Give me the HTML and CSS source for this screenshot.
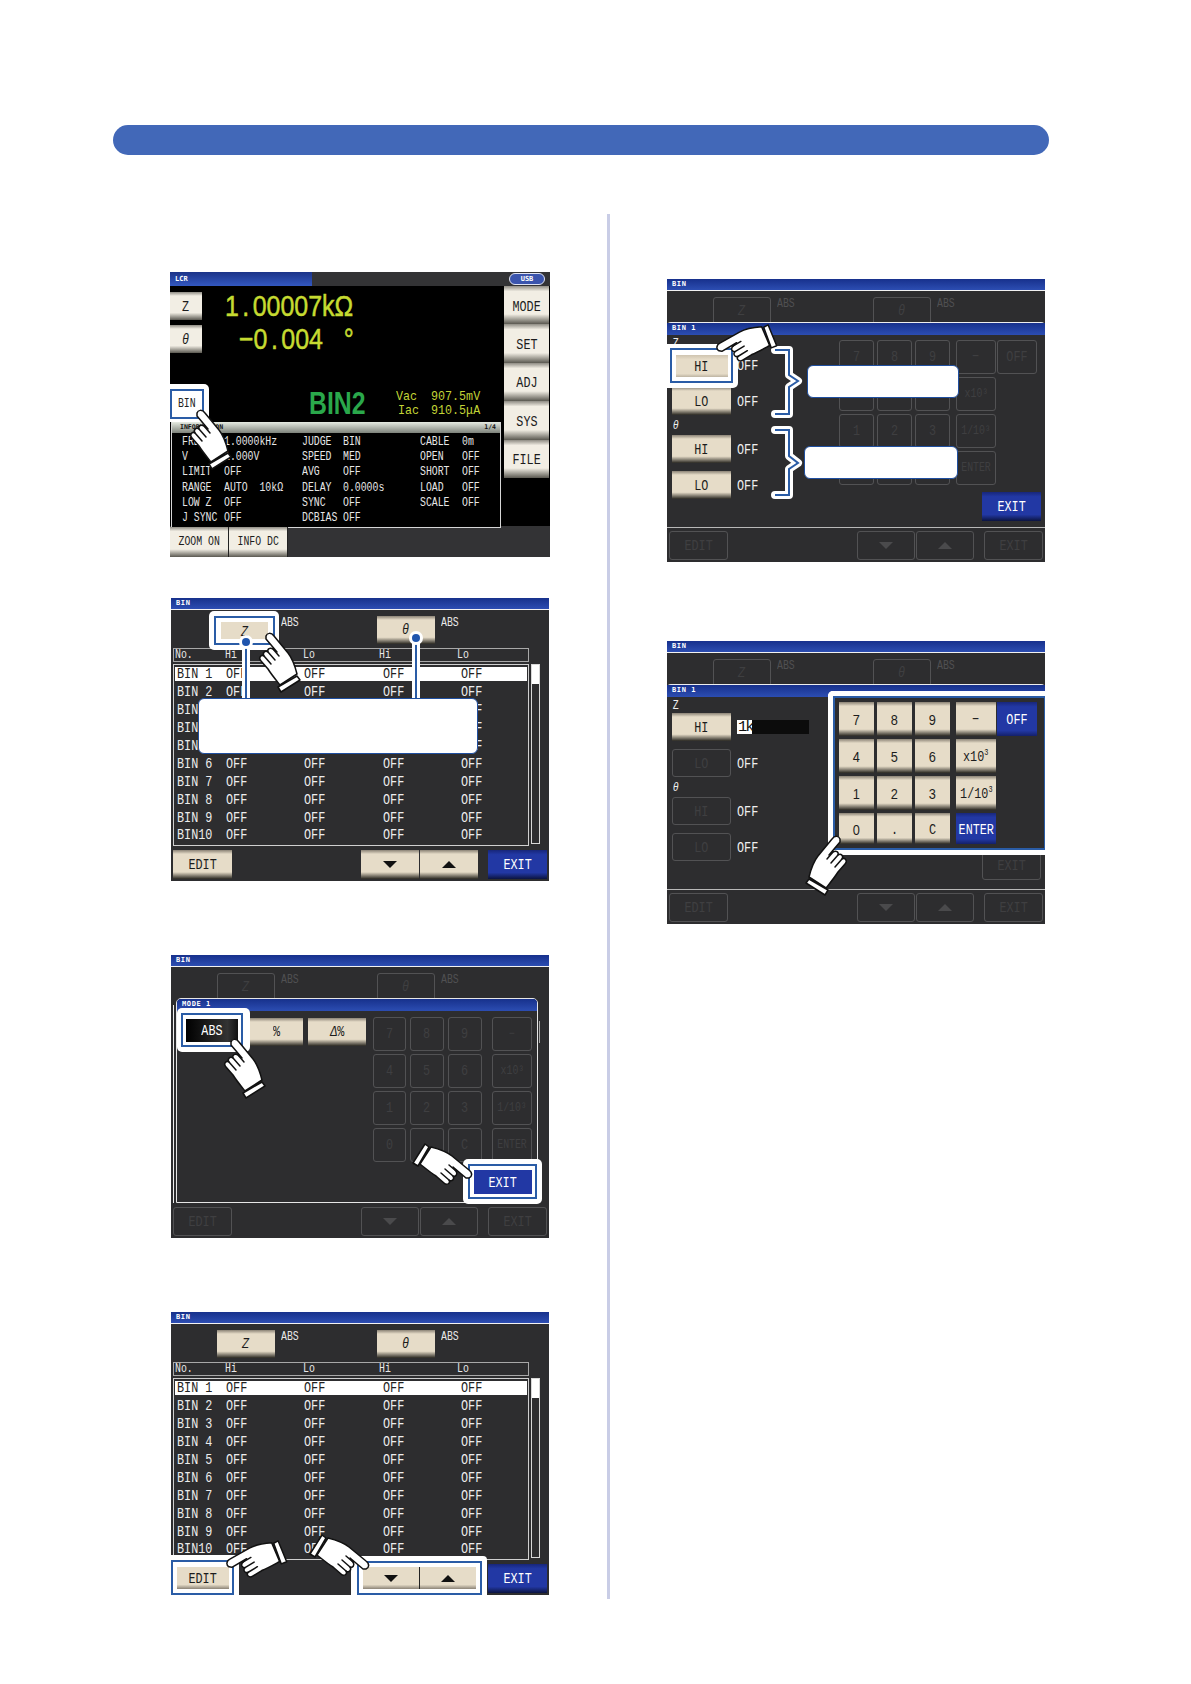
FILE: index.html
```html
<!DOCTYPE html>
<html lang="en">
<head>
<meta charset="utf-8">
<title>BIN settings</title>
<link rel="stylesheet" href="styles.css">
</head>
<body>
<svg class="defs" width="0" height="0" aria-hidden="true">
  <symbol id="hand" viewBox="0 0 50 70">
    <path class="hand-body" d="M11 12C12 9 16 8 19 12L33 29C37 34 40 42 42 50L25 61C21 56 16 50 13 45L6 37C3 34 6 30 9 32C7 29 10 26 13 28C12 25 15 23 18 25L22 28L11 15Z"/>
    <path class="hand-line" d="M9 32L16 40M13 28L20 36M18 25L24 32"/>
    <path class="hand-body" d="M23 63L42 52L45 56L26 68Z"/>
  </symbol>
</svg>
<div class="page">
  <div class="banner"></div>
  <div class="columns">
    <div class="col col-left">

      <section class="screen s1">
        <div class="s1-top">
          <div class="s1-title">LCR</div>
          <div class="usb">USB</div>
        </div>
        <div class="s1-main">
          <div class="s1-left">
            <div class="s1-upper">
              <div class="read-row r1"><div class="btn btn-light btn-side"><span class="t">Z</span></div><div class="reading">1<span class="dot">.</span>00007kΩ</div></div>
              <div class="read-row r2"><div class="btn btn-light btn-side"><span class="t"><i>θ</i></span></div><div class="reading">−0<span class="dot">.</span>004   °</div></div>
              <div class="read-row r3">
                <div class="bin-slot"></div>
                <div class="bin-result">BIN2</div>
                <div class="vac">
                  <span>Vac</span><span>907.5mV</span>
                  <span class="iac">Iac</span><span>910.5μA</span>
                </div>
              </div>
            </div>
            <div class="info">
              <div class="info-title"><span>INFORMATION</span><span>1/4</span></div>
              <div class="info-grid">
                <span>FREQ</span><span>1.0000kHz</span><span>JUDGE</span><span>BIN</span><span>CABLE</span><span>0m</span>
                <span>V</span><span>1.000V</span><span>SPEED</span><span>MED</span><span>OPEN</span><span>OFF</span>
                <span>LIMIT</span><span>OFF</span><span>AVG</span><span>OFF</span><span>SHORT</span><span>OFF</span>
                <span>RANGE</span><span>AUTO  10kΩ</span><span>DELAY</span><span>0.0000s</span><span>LOAD</span><span>OFF</span>
                <span>LOW Z</span><span>OFF</span><span>SYNC</span><span>OFF</span><span>SCALE</span><span>OFF</span>
                <span>J SYNC</span><span>OFF</span><span>DCBIAS</span><span>OFF</span><span></span><span></span>
              </div>
            </div>
          </div>
          <div class="s1-menu">
            <div class="btn btn-light btn-menu"><span class="t">MODE</span></div>
            <div class="btn btn-light btn-menu"><span class="t">SET</span></div>
            <div class="btn btn-light btn-menu"><span class="t">ADJ</span></div>
            <div class="btn btn-light btn-menu"><span class="t">SYS</span></div>
            <div class="btn btn-light btn-menu"><span class="t">FILE</span></div>
          </div>
        </div>
        <div class="s1-bottom">
          <div class="btn btn-light btn-foot"><span class="ts">ZOOM ON</span></div>
          <div class="btn btn-light btn-foot"><span class="ts">INFO DC</span></div>
        </div>
        <div class="ring ring-bin"><div class="ring-line"><span class="ts bin-text">BIN</span></div></div>
        <svg class="hand hand-s1"><use href="#hand"/></svg>
      </section>

      <section class="screen s2">
        <div class="title">BIN</div>
        <div class="modes">
          <div class="mode"><div class="btn-slot"></div><span class="abs">ABS</span></div>
          <div class="mode"><div class="btn btn-mode"><span class="t"><i>θ</i></span></div><span class="abs">ABS</span></div>
        </div>
        <div class="thead"><span>No.</span><span>Hi</span><span>Lo</span><span>Hi</span><span>Lo</span></div>
        <div class="list-wrap">
          <div class="list">
            <div class="row selected"><span>BIN 1</span><span>OFF</span><span>OFF</span><span>OFF</span><span>OFF</span></div>
            <div class="row"><span>BIN 2</span><span>OFF</span><span>OFF</span><span>OFF</span><span>OFF</span></div>
            <div class="row"><span>BIN 3</span><span>OFF</span><span>OFF</span><span>OFF</span><span>OFF</span></div>
            <div class="row"><span>BIN 4</span><span>OFF</span><span>OFF</span><span>OFF</span><span>OFF</span></div>
            <div class="row"><span>BIN 5</span><span>OFF</span><span>OFF</span><span>OFF</span><span>OFF</span></div>
            <div class="row"><span>BIN 6</span><span>OFF</span><span>OFF</span><span>OFF</span><span>OFF</span></div>
            <div class="row"><span>BIN 7</span><span>OFF</span><span>OFF</span><span>OFF</span><span>OFF</span></div>
            <div class="row"><span>BIN 8</span><span>OFF</span><span>OFF</span><span>OFF</span><span>OFF</span></div>
            <div class="row"><span>BIN 9</span><span>OFF</span><span>OFF</span><span>OFF</span><span>OFF</span></div>
            <div class="row"><span>BIN10</span><span>OFF</span><span>OFF</span><span>OFF</span><span>OFF</span></div>
          </div>
          <div class="scroll"><div class="thumb"></div></div>
        </div>
        <div class="foot">
          <div class="btn btn-foot2"><span class="t">EDIT</span></div>
          <div class="btn btn-foot2 push"><span class="tri-down"></span></div>
          <div class="btn btn-foot2"><span class="tri-up"></span></div>
          <div class="btn btn-blue btn-foot2 exit-gap"><span class="t">EXIT</span></div>
        </div>
        <div class="ring ring-z"><div class="ring-line"><div class="flat flat-z"><span class="t"><i>Z</i></span></div></div></div>
        <div class="leader leader-z"></div>
        <div class="leader leader-t"></div>
        <div class="callout callout-list"></div>
        <svg class="hand hand-s2"><use href="#hand"/></svg>
      </section>

      <section class="screen s3">
        <div class="title">BIN</div>
        <div class="modes">
          <div class="mode"><div class="ghost ghost-mode"><span class="t"><i>Z</i></span></div><span class="abs abs-ghost">ABS</span></div>
          <div class="mode"><div class="ghost ghost-mode"><span class="t"><i>θ</i></span></div><span class="abs abs-ghost">ABS</span></div>
        </div>
        <div class="edge-left"></div>
        <div class="edge-right"></div>
        <div class="foot foot-end">
          <div class="ghost ghost-foot"><span class="t">EDIT</span></div>
          <div class="ghost ghost-foot push"><span class="tri-down tri-ghost"></span></div>
          <div class="ghost ghost-foot"><span class="tri-up tri-ghost"></span></div>
          <div class="ghost ghost-foot exit-gap"><span class="t">EXIT</span></div>
        </div>
        <div class="dialog dialog-mode">
          <div class="dialog-title">MODE 1</div>
          <div class="mode-body">
            <div class="mode-choices">
              <div class="btn btn-choice"><span class="t">%</span></div>
              <div class="btn btn-choice btn-choice-wide"><span class="t"><i>Δ</i>%</span></div>
            </div>
            <div class="ghost-pad">
              <div class="ghost"><span class="t">7</span></div><div class="ghost"><span class="t">8</span></div><div class="ghost"><span class="t">9</span></div><div class="ghost ghost-wide"><span class="ts">−</span></div>
              <div class="ghost"><span class="t">4</span></div><div class="ghost"><span class="t">5</span></div><div class="ghost"><span class="t">6</span></div><div class="ghost ghost-wide"><span class="ts">x10³</span></div>
              <div class="ghost"><span class="t">1</span></div><div class="ghost"><span class="t">2</span></div><div class="ghost"><span class="t">3</span></div><div class="ghost ghost-wide"><span class="ts">1/10³</span></div>
              <div class="ghost"><span class="t">0</span></div><div class="ghost"><span class="t">.</span></div><div class="ghost"><span class="t">C</span></div><div class="ghost ghost-wide"><span class="ts">ENTER</span></div>
            </div>
          </div>
        </div>
        <div class="ring ring-abs"><div class="ring-line"><div class="flat flat-black"><span class="t">ABS</span></div></div></div>
        <div class="ring ring-exit"><div class="ring-line"><div class="flat flat-blue"><span class="t">EXIT</span></div></div></div>
        <svg class="hand hand-s3a"><use href="#hand"/></svg>
        <svg class="hand hand-right hand-s3b"><use href="#hand"/></svg>
      </section>

      <section class="screen s4">
        <div class="title">BIN</div>
        <div class="modes">
          <div class="mode"><div class="btn btn-mode"><span class="t"><i>Z</i></span></div><span class="abs">ABS</span></div>
          <div class="mode"><div class="btn btn-mode"><span class="t"><i>θ</i></span></div><span class="abs">ABS</span></div>
        </div>
        <div class="thead"><span>No.</span><span>Hi</span><span>Lo</span><span>Hi</span><span>Lo</span></div>
        <div class="list-wrap">
          <div class="list">
            <div class="row selected"><span>BIN 1</span><span>OFF</span><span>OFF</span><span>OFF</span><span>OFF</span></div>
            <div class="row"><span>BIN 2</span><span>OFF</span><span>OFF</span><span>OFF</span><span>OFF</span></div>
            <div class="row"><span>BIN 3</span><span>OFF</span><span>OFF</span><span>OFF</span><span>OFF</span></div>
            <div class="row"><span>BIN 4</span><span>OFF</span><span>OFF</span><span>OFF</span><span>OFF</span></div>
            <div class="row"><span>BIN 5</span><span>OFF</span><span>OFF</span><span>OFF</span><span>OFF</span></div>
            <div class="row"><span>BIN 6</span><span>OFF</span><span>OFF</span><span>OFF</span><span>OFF</span></div>
            <div class="row"><span>BIN 7</span><span>OFF</span><span>OFF</span><span>OFF</span><span>OFF</span></div>
            <div class="row"><span>BIN 8</span><span>OFF</span><span>OFF</span><span>OFF</span><span>OFF</span></div>
            <div class="row"><span>BIN 9</span><span>OFF</span><span>OFF</span><span>OFF</span><span>OFF</span></div>
            <div class="row"><span>BIN10</span><span>OFF</span><span>OFF</span><span>OFF</span><span>OFF</span></div>
          </div>
          <div class="scroll"><div class="thumb"></div></div>
        </div>
        <div class="foot">
          <div class="btn-slot-foot"></div>
          <div class="btn btn-blue btn-foot2 exit-solo"><span class="t">EXIT</span></div>
        </div>
        <div class="ring ring-edit"><div class="ring-line"><div class="flat flat-edit"><span class="t">EDIT</span></div></div></div>
        <div class="ring ring-nav"><div class="ring-line"><div class="flat flat-nav"><span class="tri-down"></span></div><div class="flat flat-nav flat-nav-up"><span class="tri-up"></span></div></div></div>
        <svg class="hand hand-left hand-s4a"><use href="#hand"/></svg>
        <svg class="hand hand-right hand-s4b"><use href="#hand"/></svg>
      </section>
    </div>

    <div class="divider"></div>

    <div class="col col-right">
      <section class="screen s5">
        <div class="title">BIN</div>
        <div class="modes">
          <div class="mode"><div class="ghost ghost-mode"><span class="t"><i>Z</i></span></div><span class="abs abs-ghost">ABS</span></div>
          <div class="mode"><div class="ghost ghost-mode"><span class="t"><i>θ</i></span></div><span class="abs abs-ghost">ABS</span></div>
        </div>
        <div class="foot foot-end">
          <div class="ghost ghost-foot"><span class="t">EDIT</span></div>
          <div class="ghost ghost-foot push"><span class="tri-down tri-ghost"></span></div>
          <div class="ghost ghost-foot"><span class="tri-up tri-ghost"></span></div>
          <div class="ghost ghost-foot exit-gap"><span class="t">EXIT</span></div>
        </div>
        <div class="dialog dialog-bin">
          <div class="dialog-title">BIN 1</div>
          <div class="bin-body">
            <div class="limits">
              <div class="limit-label"><span class="ts">Z</span></div>
              <div class="limit-row"><div class="btn-slot-limit"></div><span class="off">OFF</span></div>
              <div class="limit-row gap-row"><div class="btn btn-limit"><span class="t">LO</span></div><span class="off">OFF</span></div>
              <div class="limit-label gap-label"><span class="ts"><i>θ</i></span></div>
              <div class="limit-row"><div class="btn btn-limit"><span class="t">HI</span></div><span class="off">OFF</span></div>
              <div class="limit-row gap-row"><div class="btn btn-limit"><span class="t">LO</span></div><span class="off">OFF</span></div>
            </div>
            <div class="pad-col">
              <div class="pad">
                <div class="ghost"><span class="t">7</span></div><div class="ghost"><span class="t">8</span></div><div class="ghost"><span class="t">9</span></div><div class="ghost key-wide"><span class="t">−</span></div><div class="ghost key-off"><span class="t">OFF</span></div>
                <div class="ghost"><span class="t">4</span></div><div class="ghost"><span class="t">5</span></div><div class="ghost"><span class="t">6</span></div><div class="ghost key-wide"><span class="ts">x10³</span></div><div></div>
                <div class="ghost"><span class="t">1</span></div><div class="ghost"><span class="t">2</span></div><div class="ghost"><span class="t">3</span></div><div class="ghost key-wide"><span class="ts">1/10³</span></div><div></div>
                <div class="ghost"><span class="t">0</span></div><div class="ghost"><span class="t">.</span></div><div class="ghost"><span class="t">C</span></div><div class="ghost key-wide"><span class="ts">ENTER</span></div><div></div>
              </div>
              <div class="btn btn-blue btn-pad-exit"><span class="t">EXIT</span></div>
            </div>
          </div>
        </div>
        <div class="ring ring-hi"><div class="ring-line"><div class="flat flat-hi"><span class="t">HI</span></div></div></div>
        <svg class="brace" viewBox="0 0 378 283">
          <path class="brace-out" d="M108 71H122V96L131 102L122 108V135H108"/>
          <path class="brace-in" d="M108 71H122V96L131 102L122 108V135H108"/>
          <path class="brace-out" d="M108 151H122V177L131 184L122 190V216H108"/>
          <path class="brace-in" d="M108 151H122V177L131 184L122 190V216H108"/>
        </svg>
        <div class="callout callout-a"></div>
        <div class="callout callout-b"></div>
        <svg class="hand hand-left hand-s5"><use href="#hand"/></svg>
      </section>

      <section class="screen s6">
        <div class="title">BIN</div>
        <div class="modes">
          <div class="mode"><div class="ghost ghost-mode"><span class="t"><i>Z</i></span></div><span class="abs abs-ghost">ABS</span></div>
          <div class="mode"><div class="ghost ghost-mode"><span class="t"><i>θ</i></span></div><span class="abs abs-ghost">ABS</span></div>
        </div>
        <div class="foot foot-end">
          <div class="ghost ghost-foot"><span class="t">EDIT</span></div>
          <div class="ghost ghost-foot push"><span class="tri-down tri-ghost"></span></div>
          <div class="ghost ghost-foot"><span class="tri-up tri-ghost"></span></div>
          <div class="ghost ghost-foot exit-gap"><span class="t">EXIT</span></div>
        </div>
        <div class="dialog dialog-bin">
          <div class="dialog-title">BIN 1</div>
          <div class="bin-body">
            <div class="limits">
              <div class="limit-label"><span class="ts">Z</span></div>
              <div class="limit-row"><div class="btn btn-limit"><span class="t">HI</span></div><div class="entry"><span class="entry-val">1k</span></div></div>
              <div class="limit-row gap-row"><div class="ghost ghost-limit"><span class="t">LO</span></div><span class="off">OFF</span></div>
              <div class="limit-label gap-label"><span class="ts"><i>θ</i></span></div>
              <div class="limit-row"><div class="ghost ghost-limit"><span class="t">HI</span></div><span class="off">OFF</span></div>
              <div class="limit-row gap-row"><div class="ghost ghost-limit"><span class="t">LO</span></div><span class="off">OFF</span></div>
            </div>
            <div class="pad-col">
              <div class="pad pad-live">
                <div class="key key-num"><span class="t">7</span></div><div class="key key-num"><span class="t">8</span></div><div class="key key-num"><span class="t">9</span></div><div class="key key-wide"><span class="t">−</span></div><div class="key key-off key-blue"><span class="t">OFF</span></div>
                <div class="key key-num"><span class="t">4</span></div><div class="key key-num"><span class="t">5</span></div><div class="key key-num"><span class="t">6</span></div><div class="key key-wide"><span class="t">x10<sup>3</sup></span></div><div></div>
                <div class="key key-num"><span class="t">1</span></div><div class="key key-num"><span class="t">2</span></div><div class="key key-num"><span class="t">3</span></div><div class="key key-wide"><span class="t">1/10<sup>3</sup></span></div><div></div>
                <div class="key key-num"><span class="t">0</span></div><div class="key"><span class="t">.</span></div><div class="key"><span class="t">C</span></div><div class="key key-wide key-blue"><span class="t">ENTER</span></div><div></div>
              </div>
              <div class="ghost ghost-pad-exit"><span class="t">EXIT</span></div>
            </div>
          </div>
        </div>
        <div class="frame"><div class="frame-line"></div></div>
        <svg class="hand hand-mirror hand-s6"><use href="#hand"/></svg>
      </section>
    </div>
  </div>
</div>
</body>
</html>
```

FILE: styles.css
```css
* { box-sizing: border-box; }
html, body { margin: 0; background: #fff; }
body { font-family: "Liberation Mono", "DejaVu Sans Mono", monospace; }
.defs { position: absolute; }

.page { padding: 125px 0 0 113px; }
.banner { width: 936px; height: 30px; border-radius: 15px; background: #4268b8; }
.columns { display: grid; grid-template-columns: 494px 3px 1fr; margin-top: 59px; }
.divider { height: 1385px; background: #c9cde6; }
.col-left { padding: 58px 0 0 58px; }
.col-right { padding: 65px 0 0 57px; }

.screen { position: relative; width: 378px; height: 283px; background: #2d2d2f; color: #e8e8e8; display: flex; flex-direction: column; overflow: hidden; }
.s1 { width: 380px; height: 285px; margin-left: -1px; background: #333335; }
.s2 { margin-top: 41px; }
.s3, .s4 { margin-top: 74px; }
.s6 { margin-top: 79px; }

/* LCD text: fixed-pitch letters, squeezed to the panel's narrow cells */
.t, .ts { display: inline-block; white-space: pre; }
.t { font-size: 15.5px; line-height: 16px; transform: scaleX(.76); }
.ts { font-size: 12px; line-height: 14px; transform: scaleX(.82); }
.row span, .off { display: block; font-size: 15.5px; white-space: pre; transform: scaleX(.76); transform-origin: 0 50%; }
.vac span { display: block; font-size: 13px; white-space: pre; transform: scaleX(.9); transform-origin: 0 50%; }
.info-grid span, .thead span, .abs { display: block; font-size: 12px; white-space: pre; transform: scaleX(.82); transform-origin: 0 50%; }

/* title bars */
.title, .dialog-title { font: bold 7px/11px "DejaVu Sans Mono", monospace; color: #fff; letter-spacing: .6px; padding-left: 5px; background: linear-gradient(#17318c, #2c4db2); }
.title { flex: none; height: 12px; border-bottom: 1px solid #f2f2f2; }
.dialog-title { height: 12px; }

/* buttons */
.btn { display: flex; align-items: center; justify-content: center; color: #1c1c1c; background: linear-gradient(#8b8376 0, #e6dcc8 14%, #e6dcc8 76%, #2a2822 100%); }
.btn-light { background: linear-gradient(#8f8c84 0, #f2eee4 14%, #f2eee4 74%, #5a5850 100%); }
.btn-blue { color: #fff; background: linear-gradient(#17267a 0, #2238a4 16%, #2238a4 78%, #0c1440 100%); }
.ghost { display: flex; align-items: center; justify-content: center; color: #3f3f41; border: 1px solid #525254; border-radius: 3px; }
.flat { display: flex; align-items: center; justify-content: center; color: #1c1c1c; background: #e6dcc8; }
.flat .t { padding-top: 2px; }

.tri-down, .tri-up { width: 0; height: 0; border-left: 7px solid transparent; border-right: 7px solid transparent; }
.tri-down { border-top: 7px solid #111; }
.tri-up { border-bottom: 7px solid #111; }
.tri-ghost { border-top-color: #4a4a4c; border-bottom-color: #4a4a4c; }

/* screen 1 */
.s1-top { flex: none; height: 14px; display: flex; align-items: flex-start; justify-content: space-between; }
.s1-title { width: 142px; height: 14px; padding-left: 5px; font: bold 7px/15px "DejaVu Sans Mono", monospace; color: #fff; background: linear-gradient(#1b3388, #3358c0); }
.usb { width: 36px; height: 12px; margin: 1px 5px 0 0; border: 1px solid #dfe3f2; border-radius: 6px; background: #3a54ad; color: #fff; font: bold 7px/10px "DejaVu Sans Mono", monospace; text-align: center; }
.s1-main { flex: none; height: 240px; display: flex; background: #000; }
.s1-left { flex: none; width: 334px; display: flex; flex-direction: column; }
.s1-upper { flex: none; height: 136px; padding-top: 6px; }
.read-row { display: flex; align-items: center; height: 28px; }
.r2 { margin-top: 5px; }
.r3 { margin-top: 37px; }
.btn-side { width: 32px; height: 28px; padding-top: 2px; }
.reading { font-family: "Liberation Sans", sans-serif; font-size: 29px; line-height: 28px; color: #c6db31; -webkit-text-stroke: .5px #c6db31; white-space: pre; transform: scaleX(.86); transform-origin: 0 50%; }
.dot { margin: 0 4px; }
.r1 .reading { margin-left: 23px; }
.r2 .reading { margin-left: 37px; }
.bin-slot { width: 33px; }
.bin-result { margin-left: 106px; width: 56px; font-family: "Liberation Sans", sans-serif; font-size: 31px; line-height: 28px; font-weight: bold; color: #2aa84b; white-space: nowrap; transform: scaleX(.8); transform-origin: 0 50%; }
.vac { margin-left: 31px; display: grid; grid-template-columns: 35px auto; line-height: 14.5px; color: #c2d436; }
.vac .iac { margin-left: 2px; }
.info { flex: 1; margin-left: 1px; width: 330px; border: 1px solid #d6d6d6; border-top: 0; background: #000; }
.info-title { height: 11px; padding: 0 4px 0 8px; display: flex; justify-content: space-between; font: bold 6.5px/11px "DejaVu Sans Mono", monospace; color: #111; background: linear-gradient(#e6ebe2, #7d827a); }
.info-grid { display: grid; grid-template-columns: 42px 78px 41px 77px 42px 30px; grid-auto-rows: 15.4px; padding: 1.5px 0 0 10px; line-height: 15.4px; color: #e6e6e6; }
.s1-menu { flex: none; width: 45px; display: flex; flex-direction: column; }
.btn-menu { height: 38.4px; padding-top: 3px; }
.s1-bottom { flex: 1; display: flex; padding-top: 1px; }
.btn-foot { width: 59px; border-right: 1px solid #222; }
.ring { position: absolute; display: flex; background: #fff; border-radius: 5px; }
.ring-line { flex: 1; display: flex; align-items: center; justify-content: center; border: 2px solid #2a5ca6; background: #fff; }
.ring-bin { left: 0; top: 112px; width: 39px; height: 38px; padding: 5px 5px 3px 0; border-radius: 0 5px 0 0; }
.bin-text { color: #222; }

/* hand */
.hand { position: absolute; width: 50px; height: 70px; overflow: visible; z-index: 3; }
.hand-body { fill: #fff; stroke: #111; stroke-width: 1.5; stroke-linejoin: round; }
.hand-line { fill: none; stroke: #111; stroke-width: 1.5; stroke-linecap: round; }
.hand-right { transform: rotate(90deg) scaleX(-1); }
.hand-left { transform: rotate(-80deg); }
.hand-mirror { transform: scaleX(-1); }
.hand-s1 { left: 16px; top: 129px; }
.hand-s2 { left: 84px; top: 26px; }
.hand-s3a { left: 49px; top: 75px; }
.hand-s3b { left: 250px; top: 174px; }
.hand-s4a { left: 58px; top: 210px; }
.hand-s4b { left: 147px; top: 208px; }
.hand-s5 { left: 52px; top: 27px; }
.hand-s6 { left: 134px; top: 186px; }

/* mode row */
.modes { flex: none; height: 38px; padding: 6px 0 0 46px; display: grid; grid-template-columns: 160px 1fr; }
.mode { display: flex; gap: 6px; }
.btn-mode, .btn-slot, .ghost-mode { width: 58px; height: 28px; }
.abs { line-height: 14px; }
.abs-ghost { color: #505052; }

/* table */
.thead { flex: none; width: 356px; height: 14px; margin-left: 2px; border: 1px solid #a8a8a8; display: grid; grid-template-columns: 50px 78px 76px 78px 1fr; padding-left: 1px; line-height: 12px; }
.list-wrap { flex: none; height: 182px; margin-top: 2px; display: flex; padding-left: 2px; gap: 2px; }
.list { width: 356px; border: 1px solid #cfcfcf; padding: 0 1px; }
.row { height: 17.95px; display: grid; grid-template-columns: 49px 78px 79px 78px 1fr; padding-left: 2px; border-block: 2px solid transparent; background-clip: padding-box; line-height: 14px; color: #ececec; }
.selected { background-color: #fff; color: #222; }
.scroll { width: 9px; height: 180px; border: 1px solid #d8d8d8; }
.thumb { height: 19px; background: #fff; }

/* footer */
.foot { flex: none; height: 29px; margin-top: 4px; padding: 0 2px; display: flex; }
.btn-foot2, .ghost-foot { width: 58px; }
.foot .btn-foot2:first-child, .foot .ghost-foot:first-child { width: 59px; }
.push { margin-left: 129px; }
.push + .btn-foot2, .push + .ghost-foot { margin-left: 1px; }
.foot .exit-gap { margin-left: 10px; width: 59px; }
.foot-end { margin-top: auto; margin-bottom: 2px; }
.btn-slot-foot { flex: 1; }
.foot .exit-solo { width: 59px; }

/* leaders and callouts */
.leader { position: absolute; width: 2px; background: #2a5ca6; box-shadow: 0 0 0 3px #fff; z-index: 2; }
.leader::before { content: ""; position: absolute; left: -3px; top: -4px; width: 8px; height: 8px; border-radius: 50%; background: #1f55ad; box-shadow: 0 0 0 3px #fff; }
.leader-z { left: 74px; top: 44px; height: 56px; }
.leader-t { left: 244px; top: 40px; height: 60px; }
.callout { position: absolute; background: #fff; border: 1.5px solid #1f4fa0; border-radius: 6px; z-index: 2; }
.callout-list { left: 27px; top: 100px; width: 280px; height: 56px; }
.callout-a { left: 140px; top: 86px; width: 152px; height: 33px; }
.callout-b { left: 137px; top: 167px; width: 154px; height: 33px; }

.ring-z { left: 38px; top: 13px; width: 70px; height: 39px; padding: 5px 4px 5px 5px; }
.flat-z { width: 47px; height: 17px; }
.ring-abs { left: 6px; top: 53px; width: 73px; height: 44px; padding: 5px 7px 5px 4px; }
.flat-black { width: 52px; height: 23px; color: #fff; background: linear-gradient(90deg, #000, #333 80%, #111); }
.ring-exit { left: 292px; top: 204px; width: 79px; height: 45px; padding: 5px; }
.flat-blue { width: 58px; height: 24px; color: #fff; background: #2238a4; }
.ring-edit { left: 0; top: 243px; width: 68px; height: 40px; padding: 5px 5px 0 0; border-radius: 0 4px 0 0; }
.flat-edit { width: 52px; height: 22px; background: linear-gradient(#e6dcc8 80%, #8b8376); }
.ring-nav { left: 180px; top: 244px; width: 136px; height: 39px; padding: 5px 5px 0 6px; border-radius: 4px 4px 0 0; }
.flat-nav { width: 56px; height: 22px; background: linear-gradient(#e6dcc8 80%, #8b8376); }
.flat-nav-up { width: 57px; border-left: 1px solid #222; }

/* dialogs */
.dialog { position: absolute; background: #2d2d2f; }
.dialog-mode { left: 5px; top: 43px; width: 362px; height: 205px; border: 1px solid #e6e6e6; border-radius: 5px 5px 0 0; overflow: hidden; }
.mode-body { display: flex; padding: 7px 0 0 73px; }
.mode-choices { display: flex; gap: 5px; width: 123px; }
.btn-choice { width: 53px; height: 28px; }
.btn-choice-wide { width: 58px; }
.ghost-pad { display: grid; grid-template-columns: 33px 34px 34px 46px; grid-auto-rows: 34px; gap: 3px 4px; margin-top: -1px; }
.ghost-wide { width: 40px; justify-self: end; }
.edge-left { position: absolute; left: 2px; top: 50px; width: 1px; height: 198px; background: #eee; }
.edge-right { position: absolute; left: 368px; top: 66px; width: 1px; height: 22px; background: #aaa; }

.dialog-bin { left: 0; top: 43px; width: 378px; height: 206px; border-top: 1px solid #eee; border-bottom: 1px solid #b8b8b8; border-radius: 4px 4px 0 0; }
.bin-body { display: flex; }
.limits { flex: none; width: 172px; padding: 1px 0 0 5px; }
.limit-label { height: 15px; line-height: 15px; color: #eee; }
.gap-label { height: 20px; line-height: 20px; }
.limit-row { height: 28px; display: flex; align-items: center; gap: 6px; }
.limit-row .t, .off { padding-top: 2px; }
.gap-row { margin-top: 8px; }
.btn-limit, .btn-slot-limit, .ghost-limit { width: 59px; height: 28px; }
.off { color: #eee; }
.ring-hi { left: 0; top: 65px; width: 71px; height: 44px; padding: 4px 5px 5px 3px; border-radius: 0 5px 5px 0; }
.flat-hi { width: 52px; height: 22px; background: linear-gradient(#cfc4b0, #e6dcc8 20%, #e6dcc8 85%, #bdb4a2); }
.brace { position: absolute; left: 0; top: 0; width: 378px; height: 283px; z-index: 1; }
.brace-out { fill: none; stroke: #fff; stroke-width: 8; stroke-linecap: round; stroke-linejoin: round; }
.brace-in { fill: none; stroke: #2a5ca6; stroke-width: 2; }
.pad-col { flex: 1; display: flex; flex-direction: column; padding-top: 5px; }
.pad { display: grid; grid-template-columns: 35px 35px 35px 43px 41px; grid-auto-rows: 34px; gap: 3px; }
.pad-live { grid-template-rows: 34px 34px 34px 31px; }
.key { display: flex; align-items: center; justify-content: center; color: #1c1c1c; background: linear-gradient(#8b8376 0, #e6dcc8 12%, #e6dcc8 80%, #2a2822 100%); }
.key .t { padding-top: 2px; }
.key-num .t { font-family: "Liberation Sans", sans-serif; font-size: 15px; transform: scaleX(.85); }
.key-wide { width: 40px; justify-self: end; }
.key-off { width: 40px; margin-left: -2px; }
.key-blue { color: #fff; background: linear-gradient(#18277c 0, #2238a4 14%, #2238a4 84%, #14206a 100%); }
.key sup { font-size: 9px; line-height: 0; }
.btn-pad-exit, .ghost-pad-exit { width: 59px; height: 29px; margin: 7px 4px 0 auto; }
.entry { width: 72px; height: 14px; background: #0c0c0c; line-height: 14px; font-size: 15.5px; }
.entry-val { display: inline-block; width: 15px; height: 14px; background: #fff; color: #111; letter-spacing: -2px; padding-left: 1px; }
.frame { position: absolute; left: 161px; top: 50px; width: 217px; height: 164px; border: 5px solid #fff; border-right-width: 0; border-radius: 5px 0 0 0; }
.frame-line { width: 100%; height: 100%; border: 2px solid #2a5ca6; border-right-width: 1px; }
```
